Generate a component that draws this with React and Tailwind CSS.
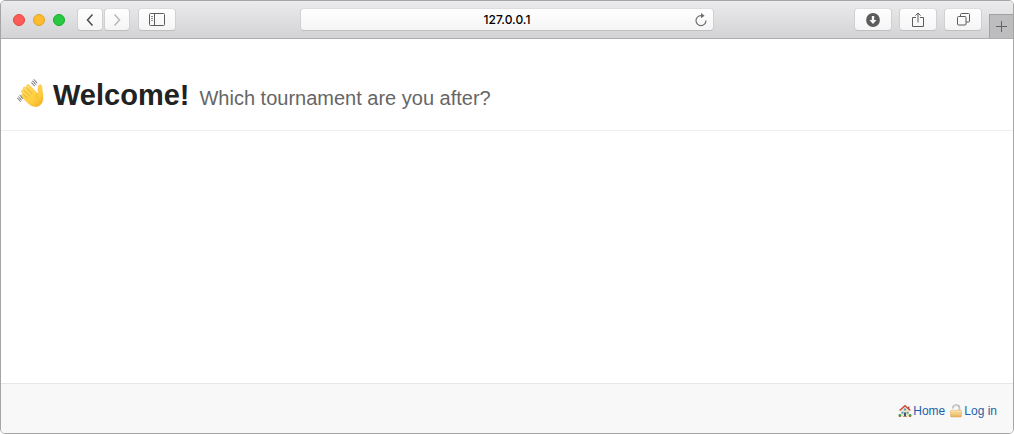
const toolButton =
  "flex h-[23px] items-center justify-center rounded border border-[#d0cfd1] border-t-[#dddcde] border-b-[#bfbec0] bg-linear-to-b from-[#fefefe] to-[#f5f5f5]";

function ToolButton({ label, className, children }) {
  return (
    <button type="button" aria-label={label} className={`${toolButton} ${className}`}>
      {children}
    </button>
  );
}

function Chevron({ d }) {
  return (
    <svg width="10" height="14" viewBox="0 0 10 14" fill="none" stroke="currentColor" strokeWidth="1.5">
      <path d={d} />
    </svg>
  );
}

function WaveIcon({ className }) {
  return (
    <svg className={className} viewBox="0 0 28 30" fill="none" aria-hidden="true">
      <defs>
        <linearGradient id="skin" x1="0" y1="0" x2="1" y2="1">
          <stop offset="0" stopColor="#ffdf6b" />
          <stop offset="0.65" stopColor="#ffcd3b" />
          <stop offset="1" stopColor="#f0aa20" />
        </linearGradient>
      </defs>
      <path
        d="M21.2 12.6 C20.8 10 21 8 21.6 6.8 C22.4 5.1 24.7 5.6 24.8 7.6 C24.9 10.5 25.9 14 26 18.5 C26.1 24.5 22.5 28 17.8 27.6 C14.5 27.2 12 25.2 9.6 22.8 L4.6 17.9 C3.2 16.3 4.7 14.4 6.4 15.6 L5 13.7 C3.6 11.8 5.2 10 7 11.3 L6.8 10.7 C5.3 8.7 7.2 6.9 9 8.5 L9.8 8.4 C8.8 6.2 11 4.6 12.7 6.4 L20.2 14.2 C20.9 14.8 21.4 14 21.2 12.6 Z"
        fill="url(#skin)"
        stroke="#f0b238"
        strokeWidth="0.5"
      />
      <path d="M6.4 15.6 L10.6 19.4 M7 11.3 L12.8 17.2 M9.6 8.8 L15.2 15" stroke="#e5a12b" strokeWidth="0.8" />
      <path d="M20.5 14.4 C19.3 15.8 19.4 17.8 20.4 19.2" stroke="#eba92b" strokeWidth="0.7" />
      <path
        d="M14.2 3.8 l1.6 .8 l.6 1.5 l1.5 .8 M15.2 2 l1.8 1 l.7 1.6 l1.6 .9 M16.7 .6 l1.6 1 l.7 1.5 l1.3 .8 M.3 19.4 l1.5 .8 l.6 1.5 l1.4 .8 M1.3 17.8 l1.5 1 l.7 1.5 l1.4 .8 M2.6 16.2 l1.4 1 l.7 1.5 l1.3 .8"
        stroke="#5d5d60"
        strokeWidth="0.9"
      />
    </svg>
  );
}

function HouseIcon() {
  return (
    <svg width="14" height="14" viewBox="0 0 14 14" aria-hidden="true">
      <path d="M2.6 6.5 L7 2.4 L11.4 6.5 V12.4 H2.6 Z" fill="#f1e6c4" />
      <path d="M10 2.5h1.4v3H10z" fill="#a85a48" />
      <path d="M1.6 6.6 L7 1.7 L12.4 6.6" fill="none" stroke="#c9453a" strokeWidth="1.3" />
      <path d="M5.9 4.6h2.2v2H5.9z M3.5 7.8h2v2h-2z M8.6 7.8h2v2h-2z" fill="#5b9cc6" />
      <path d="M6 8.4h2v4H6z" fill="#345779" />
      <path d="M5.2 12h3.6v1H5.2z" fill="#aa8b69" />
      <circle cx="1.9" cy="11.4" r="1.4" fill="#4c9944" />
      <circle cx="12.1" cy="11.4" r="1.4" fill="#4c9944" />
      <path d="M.9 12.2h2.2v.8H.9z M10.9 12.2h2.2v.8h-2.2z" fill="#ba5042" />
    </svg>
  );
}

function LockIcon() {
  return (
    <svg width="14" height="14" viewBox="0 0 14 14" aria-hidden="true">
      <defs>
        <linearGradient id="brass" x1="0" y1="0" x2="0" y2="1">
          <stop offset="0" stopColor="#ffebb8" />
          <stop offset="1" stopColor="#e8b05a" />
        </linearGradient>
      </defs>
      <path d="M3.8 4.6 V3.9 C4.2 .2 10.4 .2 10.4 3.9 V7" fill="none" stroke="#b3b2ae" strokeWidth="1.7" />
      <path d="M3.8 4.3 V3.9 C4.2 .5 10.2 .5 10.2 3.9 V7" fill="none" stroke="#e9e8e4" strokeWidth="0.7" />
      <rect x="1.5" y="6.3" width="11" height="6.7" rx="0.9" fill="url(#brass)" stroke="#d8a75c" strokeWidth="0.5" />
      <path d="M2.2 8.5h9.6 M2.2 10.5h9.6" stroke="#efc478" strokeWidth="0.5" />
    </svg>
  );
}

function Toolbar() {
  return (
    <div className="flex h-[38px] shrink-0 items-center border-b border-[#adacae] bg-linear-to-b from-[#ebeaec] to-[#d3d2d4]">
      <div className="flex flex-1 items-center">
        <div className="ml-3 flex gap-2">
          <button type="button" aria-label="Close" className="size-3 rounded-full border border-[#e2463f] bg-[#fc5b57]" />
          <button type="button" aria-label="Minimize" className="size-3 rounded-full border border-[#e1a12a] bg-[#fdbc2e]" />
          <button type="button" aria-label="Zoom" className="size-3 rounded-full border border-[#1aab2b] bg-[#28c940]" />
        </div>
        <div className="ml-3 flex gap-px">
          <ToolButton label="Back" className="w-[26px] text-[#4c4c4c]">
            <Chevron d="M7.5 1.5 L2.5 7 L7.5 12.5" />
          </ToolButton>
          <ToolButton label="Forward" className="w-[26px] text-[#b8b8b8]">
            <Chevron d="M2.5 1.5 L7.5 7 L2.5 12.5" />
          </ToolButton>
        </div>
        <ToolButton label="Show sidebar" className="ml-2 w-[38px] text-[#5c5c5c]">
          <svg width="16" height="13" viewBox="0 0 16 13" fill="none" stroke="currentColor">
            <rect x="0.5" y="0.5" width="15" height="12" rx="1" />
            <path d="M5.5 .5v12" />
            <path d="M2 3.5h2 M2 5.5h2 M2 7.5h2" strokeWidth="0.7" />
          </svg>
        </ToolButton>
      </div>

      <div className="flex h-[23px] w-[41%] items-center rounded border border-[#d0cfd1] border-t-[#dddcde] border-b-[#bfbec0] bg-linear-to-b from-[#fefefe] to-[#f5f5f5] px-1">
        <input
          type="text"
          aria-label="Address"
          defaultValue="127.0.0.1"
          className="min-w-0 flex-1 bg-transparent pl-4 text-center font-['Inter',sans-serif] text-xs font-medium text-black outline-none"
        />
        <button type="button" aria-label="Reload" className="flex size-4 items-center justify-center text-[#6e6e6e]">
          <svg width="14" height="14" viewBox="0 0 14 14" fill="none" stroke="currentColor" strokeWidth="1.2">
            <path d="M8 2.6 H7 A5 5 0 1 0 12 7.6" />
            <path d="M7 .1 L10.6 2.7 L7 5.2 Z" fill="currentColor" stroke="none" />
          </svg>
        </button>
      </div>

      <div className="flex flex-1 items-center justify-end self-stretch">
        <div className="mr-[7px] flex gap-[7px]">
          <ToolButton label="Downloads" className="w-[38px] text-[#5c5c5c]">
            <svg width="14" height="14" viewBox="0 0 14 14" fill="none">
              <circle cx="7" cy="7" r="6.9" fill="#5c5c5c" />
              <path d="M5.8 3h2.4v4h2.3L7 10.9 3.5 7h2.3z" fill="#fafafa" />
            </svg>
          </ToolButton>
          <ToolButton label="Share" className="w-[38px] text-[#5c5c5c]">
            <svg width="12" height="16" viewBox="0 0 12 16" fill="none" stroke="currentColor">
              <path d="M4 5.5H.5v9h11v-9H8 M6 10.5V1 M3.4 3.6L6 1l2.6 2.6" />
            </svg>
          </ToolButton>
          <ToolButton label="Show all tabs" className="w-[38px] text-[#5c5c5c]">
            <svg width="13" height="13" viewBox="0 0 13 13" fill="none" stroke="currentColor">
              <rect x="0.5" y="3.5" width="8.5" height="8.5" rx="1" />
              <path d="M3.5 3.5V1.5a1 1 0 0 1 1-1h7a1 1 0 0 1 1 1v6.5a1 1 0 0 1-1 1H9" />
            </svg>
          </ToolButton>
        </div>
        <button
          type="button"
          aria-label="New tab"
          className="flex h-6 w-6 items-center justify-center self-end border-t border-l border-[#a2a1a3] bg-[#bdbcbe] text-[#626262]"
        >
          <svg width="11" height="11" viewBox="0 0 11 11" stroke="currentColor">
            <path d="M5.5 0v11 M0 5.5h11" />
          </svg>
        </button>
      </div>
    </div>
  );
}

export default function App() {
  return (
    <div className="min-h-screen bg-white">
      <div className="flex min-h-screen flex-col overflow-hidden rounded-[5px] border border-[#a5a5a5] bg-white font-['Liberation_Sans',Arial,sans-serif]">
        <Toolbar />
        <header className="flex items-baseline border-b border-[#eeeeee] px-4 pt-9 pb-3">
          <WaveIcon className="mt-1 h-[30px] w-7 self-start" />
          <h1 className="ml-2 text-[29px] leading-10 font-bold text-[#222222]">Welcome!</h1>
          <p className="ml-2.5 text-xl leading-10 text-[#666666]">Which tournament are you after?</p>
        </header>
        <main className="flex-1" />
        <footer className="flex h-[50px] items-center justify-end gap-1 border-t border-[#e7e7e7] bg-[#f8f8f8] px-4 pt-1 text-xs text-[#1a62a8]">
          <a href="#home" className="flex items-center gap-px">
            <HouseIcon />
            Home
          </a>
          <a href="#login" className="flex items-center gap-px">
            <LockIcon />
            Log in
          </a>
        </footer>
      </div>
    </div>
  );
}
